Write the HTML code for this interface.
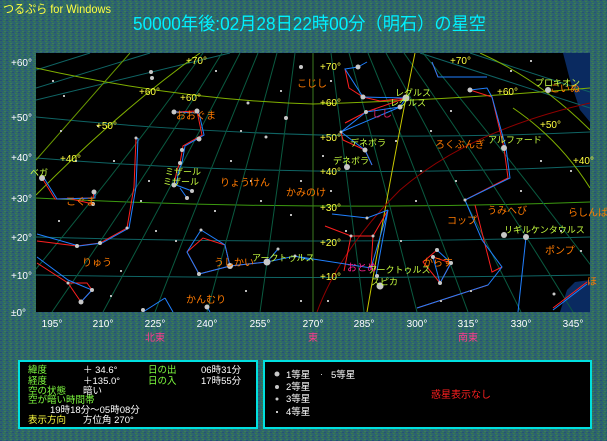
<!DOCTYPE html>
<html><head><meta charset="utf-8"><style>
html,body{margin:0;padding:0;background:#2e6668;}
svg{display:block}
text{font-family:"Liberation Sans","Noto Sans CJK JP",sans-serif;}
</style></head><body>
<svg width="607" height="441" viewBox="0 0 607 441" xmlns="http://www.w3.org/2000/svg">
<defs>
<pattern id="nz" width="6" height="4" patternUnits="userSpaceOnUse">
<rect width="6" height="4" fill="#2e6868"/>
<rect x="0" y="0" width="2" height="1" fill="#284f78"/>
<rect x="3" y="1" width="2" height="1" fill="#3a7a50"/>
<rect x="1" y="2" width="2" height="1" fill="#2a5a80"/>
<rect x="4" y="3" width="2" height="1" fill="#3c7a5c"/>
</pattern>
<clipPath id="ch"><rect x="36" y="53" width="554" height="259"/></clipPath>
</defs>
<rect width="607" height="441" fill="url(#nz)"/>

<text x="3" y="13" font-size="12" fill="#ffff40" textLength="108" lengthAdjust="spacingAndGlyphs">つるぷら for Windows</text>
<text x="133" y="30" font-size="18" fill="#00f0ff" textLength="353" lengthAdjust="spacingAndGlyphs">50000年後:02月28日22時00分（明石）の星空</text>

<rect x="36" y="53" width="554" height="259" fill="#000"/>
<g clip-path="url(#ch)" fill="none" stroke-width="1">
<path d="M563,53 L590,53 L590,122 L580,110 L570,80 Z" fill="#0a2a60" stroke="none"/>
<path d="M567,290 L575,282 L590,280 L590,312 L560,312 Z" fill="#0a2a60" stroke="none"/>
<g stroke="#0f6464">
<path d="M36,275 Q313,280 590,275"/>
<path d="M36,237 Q313,245 590,237"/>
<path d="M36,158 Q313,180 590,166"/>
<path d="M36,117 Q313,145 590,132"/>
<path d="M36,88 L150,53"/><path d="M36,100 L230,53"/>
<path d="M36,70 L90,53"/>
<path d="M470,53 L590,92"/><path d="M420,53 L590,108"/>
</g>
<path d="M36,198 Q313,212 590,202" stroke="#3c9a10"/>
<g stroke="#0a5a40">
<path d="M0,312 Q120,170 203,53"/>
<path d="M52,312 Q150,170 222,53"/>
<path d="M103,312 Q180,170 240,53"/>
<path d="M155,312 Q210,170 258,53"/>
<path d="M207,312 Q245,170 277,53"/>
<path d="M260,312 Q280,170 295,53"/>
<path d="M313,312 L313,53" stroke="#3c7a20"/>
<path d="M364,312 Q346,170 331,53"/>
<path d="M417,312 Q381,170 349,53"/>
<path d="M468,312 Q416,170 368,53"/>
<path d="M521,312 Q451,170 386,53"/>
<path d="M573,312 Q486,170 404,53"/>
<path d="M626,312 Q520,170 423,53"/>
</g>
<g stroke="#80b000">
<path d="M36,68 Q180,100 313,104 Q450,100 590,88"/>
<path d="M36,195 Q120,110 200,53"/>
<path d="M36,160 Q80,110 130,53" stroke="#6a9a00"/>
<path d="M513,108 Q560,140 590,188"/>
<path d="M480,53 Q540,80 590,130"/>
</g>
<path d="M415,53 Q395,150 367,312" stroke="#c8c800"/>
<path d="M590,103 Q470,130 400,190 Q340,250 317,312" stroke="#900000"/>

<g stroke="#ff2020">
<path d="M136,138 L134,187 L127,228 L100,243 L77,246 L37,241"/>
<path d="M42,178 L55,199 L93,198 L94,192 M67,198 L93,204"/>
<path d="M37,263 L68,283 L81,302 L92,290 L87,283 L68,283"/>
<path d="M174,112 L197,111 L202,135 L183,146 L180,163 L177,170 L174,185"/>
<path d="M187,252 L199,274 L230,266 L267,262 M187,252 L203,238 L225,245 L230,266"/>
<path d="M345,69 L349,88 L363,97 L380,101 L406,98 M345,123 L366,112 L406,98 M341,132 L343,140 L365,150 L372,165"/>
<path d="M432,62 L438,77 L487,77"/>
<path d="M470,90 L492,97 L504,148 L508,178 L465,200 M475,205 L492,272 L502,267 M488,285 L417,308"/>
<path d="M437,250 L423,262 L440,283 L451,263 L433,257"/>
<path d="M388,210 L373,236 L371,268 M325,226 L351,236 L373,236 M351,236 L344,271"/>
<path d="M553,308 L587,282"/>
</g>
<g stroke="#2080ff">
<path d="M138,138 L136,187 L129,228 L102,243 L79,246 L37,234"/>
<path d="M44,178 L57,199 L95,198 L95,192"/>
<path d="M37,257 L68,280 L92,290 L81,302"/>
<path d="M176,112 L199,113 L204,135 L185,146 L182,163 L179,170 L176,185 L192,191 M180,188 L187,198"/>
<path d="M201,230 L187,252 L199,274 L230,266 L225,245 L201,230 M230,266 L267,262 L278,249 M267,262 L295,256 L310,260"/>
<path d="M165,298 L143,312 M165,298 L173,312 M207,307 L210,312"/>
<path d="M358,67 L367,62 M358,67 L345,69 L363,97 L406,98 L400,107 L366,112 L341,132 L365,150 L372,165 M400,107 L341,132"/>
<path d="M432,62 L438,77 L487,77"/>
<path d="M470,90 L487,88 L492,97 L506,148 L510,178 L465,200 L482,240 L502,267 L488,285 L417,308"/>
<path d="M437,250 L451,263 L440,283 L433,257"/>
<path d="M300,257 L371,268 L388,210 L376,276 M332,214 L367,218 L388,210"/>
<path d="M526,237 L518,312"/>
<path d="M553,310 L587,284"/>
</g>
</g>

<g fill="#c8c8c8">
<circle cx="42" cy="178" r="3"/><circle cx="94" cy="192" r="2.5"/><circle cx="93" cy="204" r="2"/>
<circle cx="174" cy="112" r="2.5"/><circle cx="197" cy="111" r="2.5"/><circle cx="199" cy="139" r="2.5"/>
<circle cx="182" cy="150" r="2"/><circle cx="180" cy="163" r="2"/><circle cx="174" cy="185" r="2.5"/>
<circle cx="192" cy="191" r="2"/><circle cx="187" cy="198" r="2"/><circle cx="136" cy="138" r="1.5"/>
<circle cx="127" cy="228" r="1.5"/><circle cx="100" cy="243" r="2"/><circle cx="77" cy="246" r="2"/>
<circle cx="81" cy="302" r="2.5"/><circle cx="92" cy="290" r="2"/><circle cx="68" cy="283" r="1.5"/>
<circle cx="267" cy="262" r="3.5"/><circle cx="230" cy="266" r="3"/><circle cx="199" cy="274" r="2"/>
<circle cx="278" cy="249" r="1.5"/><circle cx="295" cy="256" r="1.5"/><circle cx="201" cy="230" r="1.5"/>
<circle cx="143" cy="310" r="2"/><circle cx="207" cy="307" r="2.5"/>
<circle cx="406" cy="98" r="3.5"/><circle cx="400" cy="107" r="2.5"/><circle cx="363" cy="97" r="2.5"/>
<circle cx="358" cy="67" r="2.5"/><circle cx="366" cy="112" r="2"/><circle cx="365" cy="150" r="2.5"/>
<circle cx="347" cy="167" r="3"/><circle cx="341" cy="132" r="1.5"/>
<circle cx="470" cy="90" r="2.5"/><circle cx="504" cy="148" r="3"/><circle cx="465" cy="200" r="1.5"/>
<circle cx="380" cy="286" r="3.5"/><circle cx="377" cy="276" r="2"/><circle cx="373" cy="236" r="1.5"/>
<circle cx="351" cy="236" r="1.5"/><circle cx="367" cy="218" r="1.5"/>
<circle cx="437" cy="250" r="2"/><circle cx="433" cy="257" r="2"/><circle cx="451" cy="263" r="2"/><circle cx="440" cy="283" r="2"/>
<circle cx="526" cy="237" r="3"/><circle cx="504" cy="235" r="3"/><circle cx="548" cy="90" r="3"/>
<circle cx="266" cy="137" r="1.5"/><circle cx="286" cy="118" r="2"/><circle cx="301" cy="67" r="2"/>
<circle cx="151" cy="72" r="2"/><circle cx="152" cy="78" r="2"/><circle cx="248" cy="103" r="1.5"/>
<circle cx="554" cy="294" r="1.5"/>
</g>
<g fill="#bbbbbb">
<rect x="52" y="80" width="2" height="2"/><rect x="63" y="95" width="2" height="2"/><rect x="97" y="125" width="2" height="2"/>
<rect x="75" y="160" width="2" height="2"/><rect x="58" y="220" width="2" height="2"/><rect x="113" y="160" width="2" height="2"/>
<rect x="148" y="180" width="2" height="2"/><rect x="155" y="230" width="2" height="2"/><rect x="120" y="270" width="2" height="2"/>
<rect x="110" y="295" width="2" height="2"/><rect x="230" y="160" width="2" height="2"/><rect x="250" y="180" width="2" height="2"/>
<rect x="214" y="210" width="2" height="2"/><rect x="260" y="200" width="2" height="2"/><rect x="290" y="214" width="2" height="2"/>
<rect x="300" y="180" width="2" height="2"/><rect x="240" y="130" width="2" height="2"/><rect x="280" y="90" width="2" height="2"/>
<rect x="215" y="70" width="2" height="2"/><rect x="245" y="290" width="2" height="2"/><rect x="300" y="300" width="2" height="2"/>
<rect x="330" y="80" width="2" height="2"/><rect x="322" y="155" width="2" height="2"/><rect x="330" y="190" width="2" height="2"/>
<rect x="420" y="170" width="2" height="2"/><rect x="430" y="130" width="2" height="2"/><rect x="450" y="110" width="2" height="2"/>
<rect x="455" y="180" width="2" height="2"/><rect x="520" y="190" width="2" height="2"/><rect x="540" y="160" width="2" height="2"/>
<rect x="570" y="170" width="2" height="2"/><rect x="560" y="230" width="2" height="2"/><rect x="580" y="250" width="2" height="2"/>
<rect x="470" y="290" width="2" height="2"/><rect x="440" y="300" width="2" height="2"/><rect x="400" y="240" width="2" height="2"/>
<rect x="415" y="200" width="2" height="2"/><rect x="345" y="230" width="2" height="2"/><rect x="327" y="300" width="2" height="2"/>
<rect x="530" y="60" width="2" height="2"/><rect x="510" y="70" width="2" height="2"/><rect x="395" y="140" width="2" height="2"/>
<rect x="60" y="130" width="2" height="2"/><rect x="175" y="240" width="2" height="2"/><rect x="140" y="200" width="2" height="2"/>
</g>

<g font-size="10" fill="#ff7a00">
<text x="297" y="87">こじし</text>
<text x="176" y="119">おおぐま</text>
<text x="220" y="186">りょうけん</text>
<text x="286" y="196">かみのけ</text>
<text x="435" y="148">ろくぶんぎ</text>
<text x="487" y="214">うみへび</text>
<text x="447" y="224">コップ</text>
<text x="568" y="216">らしんば</text>
<text x="545" y="254">ポンプ</text>
<text x="423" y="266">からす</text>
<text x="550" y="92">こいぬ</text>
<text x="587" y="285">ほ</text>
<text x="82" y="266">りゅう</text>
<text x="214" y="266">うしかい</text>
<text x="186" y="303">かんむり</text>
<text x="66" y="205">こぐま</text>
</g>
<text x="372" y="117" font-size="10" fill="#e02060">しし</text>
<text x="347" y="271" font-size="10" fill="#ff2090">おとめ</text>
<g font-size="9" fill="#c8ff40">
<text x="30" y="176">ベガ</text>
<text x="165" y="175">ミザール</text>
<text x="163" y="185">ミザール</text>
<text x="252" y="261">アークトゥルス</text>
<text x="395" y="96">レグルス</text>
<text x="390" y="106">レグルス</text>
<text x="350" y="146">デネボラ</text>
<text x="333" y="164">デネボラ</text>
<text x="488" y="143">アルファード</text>
<text x="504" y="233">リギルケンタウルス</text>
<text x="368" y="273">アークトゥルス</text>
<text x="371" y="285">スピカ</text>
<text x="535" y="86">プロキオン</text>
</g>
<g font-size="10" fill="#ffff40">
<text x="186" y="64">+70°</text><text x="139" y="95">+60°</text><text x="96" y="129">+50°</text><text x="60" y="162">+40°</text>
<text x="450" y="64">+70°</text><text x="497" y="95">+60°</text><text x="540" y="128">+50°</text><text x="573" y="164">+40°</text>
<text x="320" y="70">+70°</text><text x="320" y="106">+60°</text><text x="320" y="141">+50°</text><text x="320" y="175">+40°</text>
<text x="320" y="211">+30°</text><text x="320" y="246">+20°</text><text x="320" y="280">+10°</text>
<text x="180" y="101">+60°</text>
</g>

<g font-size="10" fill="#ffffff">
<text x="11" y="66">+60°</text><text x="11" y="121">+50°</text><text x="11" y="161">+40°</text>
<text x="11" y="202">+30°</text><text x="11" y="241">+20°</text><text x="11" y="279">+10°</text><text x="11" y="316">±0°</text>
</g>
<g font-size="10" fill="#ffffff" text-anchor="middle">
<text x="52" y="327">195°</text><text x="103" y="327">210°</text><text x="155" y="327">225°</text><text x="207" y="327">240°</text>
<text x="260" y="327">255°</text><text x="313" y="327">270°</text><text x="364" y="327">285°</text><text x="417" y="327">300°</text>
<text x="468" y="327">315°</text><text x="521" y="327">330°</text><text x="573" y="327">345°</text>
</g>
<g font-size="10" fill="#ff3c8c" text-anchor="middle">
<text x="155" y="341">北東</text><text x="313" y="341">東</text><text x="468" y="341">南東</text>
</g>

<rect x="19" y="361" width="238" height="67" fill="#000" stroke="#00e0e0" stroke-width="2"/>
<rect x="264" y="361" width="327" height="67" fill="#000" stroke="#00e0e0" stroke-width="2"/>
<g font-size="9.5">
<text x="28" y="373" fill="#80ff40">緯度</text><text x="83" y="373" fill="#fff">＋ 34.6°</text>
<text x="148" y="373" fill="#80ff40">日の出</text><text x="201" y="373" fill="#fff">06時31分</text>
<text x="28" y="384" fill="#80ff40">経度</text><text x="83" y="384" fill="#fff">＋135.0°</text>
<text x="148" y="384" fill="#80ff40">日の入</text><text x="201" y="384" fill="#fff">17時55分</text>
<text x="28" y="394" fill="#80ff40">空の状態</text><text x="83" y="394" fill="#fff">暗い</text>
<text x="28" y="403" fill="#80ff40">空が暗い時間帯</text>
<text x="50" y="413" fill="#fff">19時18分〜05時08分</text>
<text x="28" y="423" fill="#ffff40">表示方向</text><text x="83" y="423" fill="#fff">方位角 270°</text>
</g>
<g fill="#c8c8c8">
<circle cx="277" cy="374" r="2.5"/><circle cx="277" cy="387" r="2"/><circle cx="277" cy="399" r="1.5"/><rect x="276" y="411" width="2" height="2"/>
<rect x="321" y="374" width="1" height="1"/>
</g>
<g font-size="9.5" fill="#fff">
<text x="286" y="378">1等星</text><text x="331" y="378">5等星</text>
<text x="286" y="390">2等星</text><text x="286" y="402">3等星</text><text x="286" y="415">4等星</text>
</g>
<text x="431" y="398" font-size="10" fill="#ff2020">惑星表示なし</text>
</svg>
</body></html>
